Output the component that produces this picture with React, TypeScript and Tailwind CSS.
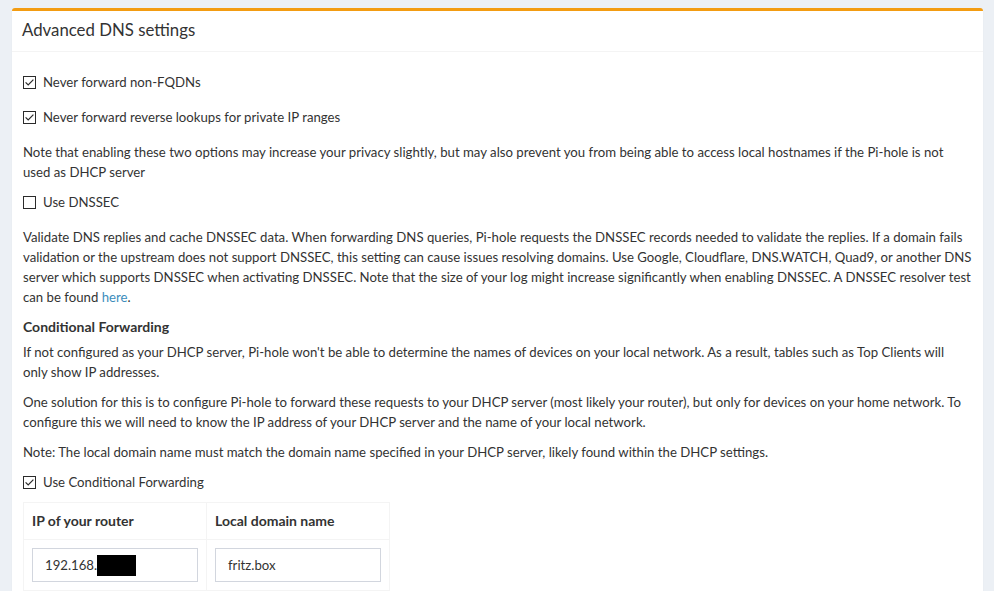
import React from "react";

function Box({ checked }: { checked?: boolean }) {
  return (
    <span className="inline-flex h-[13px] w-[13px] shrink-0 items-center justify-center border border-[#2b2b2b] bg-white">
      {checked && (
        <svg viewBox="0 0 11 11" className="h-[11px] w-[11px]" fill="none">
          <path d="M1.6 5.4 4.2 8 9.4 2.6" stroke="#2b2b2b" strokeWidth="1.2" />
        </svg>
      )}
    </span>
  );
}

function Check({ label, checked, className = "" }: { label: string; checked?: boolean; className?: string }) {
  return (
    <label className={`flex h-5 items-center gap-[7px] ${className}`}>
      <Box checked={checked} />
      <span>{label}</span>
    </label>
  );
}

export default function App() {
  return (
    <div
      className="min-h-screen bg-[#ecf0f5] pl-3 pr-[11px] pt-2 text-[13.2px] leading-5 text-[#333]"
      style={{ fontFamily: '"Lato", "Liberation Sans", sans-serif' }}
    >
      <div className="rounded-[3px] border-t-[3px] border-[#f39c12] bg-white shadow-[0_1px_1px_rgba(0,0,0,0.1)]">
        <div className="border-b border-[#f4f4f4] px-[10px] pb-[11px] pt-[9px]">
          <h3 className="text-[16.8px] leading-5">Advanced DNS settings</h3>
        </div>
        <div className="pb-4 pl-[11px] pr-[11px] pt-5">
          <Check label="Never forward non-FQDNs" checked />
          <Check label="Never forward reverse lookups for private IP ranges" checked className="mt-[15px]" />
          <p className="mt-[15px]">
            Note that enabling these two options may increase your privacy slightly, but may also prevent you from
            being able to access local hostnames if the Pi-hole is not used as DHCP server
          </p>
          <Check label="Use DNSSEC" className="mt-[10px]" />
          <p className="mt-[15px]">
            Validate DNS replies and cache DNSSEC data. When forwarding DNS queries, Pi-hole requests the DNSSEC
            records needed to validate the replies. If a domain fails validation or the upstream does not support
            DNSSEC, this setting can cause issues resolving domains. Use Google, Cloudflare, DNS.WATCH, Quad9, or
            another DNS server which supports DNSSEC when activating DNSSEC. Note that the size of your log might
            increase significantly when enabling DNSSEC. A DNSSEC resolver test can be found{" "}
            <a className="text-[#3c8dbc]">here</a>.
          </p>
          <h4 className="mt-[10px] text-[14px] font-bold">Conditional Forwarding</h4>
          <p className="mt-[5px]">
            If not configured as your DHCP server, Pi-hole won't be able to determine the names of devices on your
            local network. As a result, tables such as Top Clients will
            <br />
            only show IP addresses.
          </p>
          <p className="mt-[10px]">
            One solution for this is to configure Pi-hole to forward these requests to your DHCP server (most likely
            your router), but only for devices on your home network. To configure this we will need to know the IP
            address of your DHCP server and the name of your local network.
          </p>
          <p className="mt-[10px]">
            Note: The local domain name must match the domain name specified in your DHCP server, likely found within
            the DHCP settings.
          </p>
          <Check label="Use Conditional Forwarding" checked className="mt-[10px]" />
          <table className="mt-[10px] w-[367px] table-fixed border-collapse border border-[#f4f4f4]">
            <thead>
              <tr>
                <th className="w-[183px] border border-[#f4f4f4] p-2 text-left text-[14px] font-bold">
                  IP of your router
                </th>
                <th className="border border-[#f4f4f4] p-2 text-left text-[14px] font-bold">Local domain name</th>
              </tr>
            </thead>
            <tbody>
              <tr>
                <td className="border border-[#f4f4f4] p-2">
                  <div className="flex h-[34px] items-center border border-[#d2d6de] px-3">
                    <span>192.168.</span>
                    <span className="h-[21px] w-[39px] bg-black" />
                  </div>
                </td>
                <td className="border border-[#f4f4f4] p-2">
                  <div className="flex h-[34px] items-center border border-[#d2d6de] px-3">fritz.box</div>
                </td>
              </tr>
            </tbody>
          </table>
        </div>
      </div>
    </div>
  );
}
